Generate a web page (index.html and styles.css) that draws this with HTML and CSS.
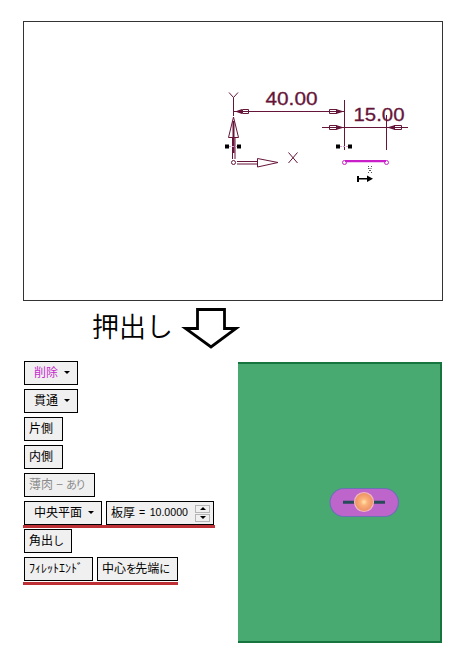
FILE: index.html
```html
<!DOCTYPE html>
<html lang="ja">
<head>
<meta charset="utf-8">
<title>押出し</title>
<link rel="stylesheet" href="styles.css">
</head>
<body>
<main class="page">
  <section class="sketch">
    <svg class="drawing" width="418" height="278" viewBox="24 22 418 278">
      <g class="axis">
        <path d="M233.5 101V116M232.5 137V159M235 137V159M233.5 117L228.5 137.5H238.5ZM237 161.5H257M237 164H257M257.5 158.500V167L278 162.500Z"/>
        <circle cx="233.500" cy="162.500" r="2"/>
        <path d="M229 92.500L233.500 97.500L238 92.500M233.500 97.500V101M288.500 152.500L297.500 163M297.500 152.500L288.500 163"/>
        <path class="thick" d="M233.500 121V153"/>
      </g>
      <g class="dimension">
        <path d="M234 111.500H344M344.500 100V150M386.500 115V150M322 127.500H408"/>
        <path d="M242.500 109.500H248.500V113.500H242.500ZM329.500 109.500H336.500V113.500H329.500ZM329.500 125.500H336.500V129.500H329.500ZM394.500 125.500H401.500V129.500H394.500Z"/>
        <path class="solid" d="M235 111.500L242 109V114ZM344 111.500L336 109V114ZM344 127.500L336 125V130ZM387 127.500L395 125V130Z"/>
        <text x="265.500" y="104.700" textLength="52" lengthAdjust="spacingAndGlyphs">40.00</text>
        <text x="353.500" y="121" textLength="51" lengthAdjust="spacingAndGlyphs">15.00</text>
      </g>
      <g class="profile">
        <path class="profile-line" d="M345 161.200H386"/>
        <circle cx="344.500" cy="162.500" r="2"/>
        <circle cx="386.500" cy="162.500" r="2"/>
        <path class="link" d="M229 146.500H238M340 146.500H348"/>
      </g>
      <g class="handles">
        <path d="M225 144.500h4v4h-4zM237 144.500h4v4h-4zM336 144.500h4v4h-4zM348 144.500h4v4h-4zM357 176h2v6h-2zM359 178h8v1.500h-8zM367 175.500l6 3.200l-6 3.200z"/>
        <path class="marker" d="M368 166.500h1M371 166.500h1M368 168.500h1.500M370.500 168.500h1M369 170.500h2M368 172.500h1M371 172.500h1"/>
      </g>
    </svg>
  </section>

  <div class="operation">
    <span class="operation-name">押出し</span>
    <svg class="arrow" width="60" height="44" viewBox="180 306 60 44"><path d="M197.500 309.500H224.500V328.500H236L211 347L185.500 328.500H197.500Z"/></svg>
  </div>

  <div class="detail">
    <div class="options">
      <div class="row"><button class="btn menu remove">削除<i class="caret"></i></button></div>
      <div class="row"><button class="btn menu">貫通<i class="caret"></i></button></div>
      <div class="row"><button class="btn">片側</button></div>
      <div class="row"><button class="btn">内側</button></div>
      <div class="row"><button class="btn thin" disabled>薄肉<span class="dash">−</span><span class="kana">あり</span></button></div>
      <div class="row marked">
        <button class="btn menu plane">中央平面<i class="caret"></i></button>
        <div class="btn thickness">板厚<span class="value">= 10.0000</span>
          <span class="spinner"><i class="up"></i><i class="down"></i></span>
        </div>
      </div>
      <div class="row"><button class="btn corner">角出<span class="kana">し</span></button></div>
      <div class="row marked ends">
        <button class="btn fillet">ﾌｨﾚｯﾄｴﾝﾄﾞ</button>
        <button class="btn center">中心<span class="kana">を</span>先端<span class="kana">に</span></button>
      </div>
    </div>
    <div class="solid-view">
      <svg width="72" height="32" viewBox="328 486 72 32">
        <defs>
          <radialGradient id="ball"><stop offset="0" stop-color="#ffe9ad"/><stop offset=".35" stop-color="#fbb27a"/><stop offset="1" stop-color="#ec8f62"/></radialGradient>
        </defs>
        <rect class="slot" x="330" y="488.500" width="68.500" height="28" rx="14"/>
        <path class="slot-axis" d="M343 502.300H385"/>
        <circle class="ball" cx="364" cy="502" r="9.500" fill="url(#ball)"/>
      </svg>
    </div>
  </div>
</main>
</body>
</html>
```
FILE: styles.css
```css
* { box-sizing: border-box; }
body { margin: 0; background: #fff; }

.page {
  width: 473px;
  height: 661px;
  padding: 21px 30px 0 23px;
  overflow: hidden;
  font-family: "Noto Sans CJK JP", sans-serif;
}

.sketch {
  width: 420px;
  height: 280px;
  border: 1px solid #333;
}
.drawing { display: block; }
.drawing path, .drawing circle { fill: none; stroke-width: 1; }
.axis, .dimension { stroke: #651539; }
.drawing .thick { stroke-width: 2; }
.drawing .solid { fill: #651539; stroke: none; }
.dimension text {
  fill: #651539;
  stroke: #651539;
  stroke-width: .3;
  font: 19px "Liberation Sans", sans-serif;
}
.profile { stroke: #c91fc9; }
.drawing .profile-line { stroke-width: 2.2; }
.profile .link { stroke: #dba0cf; stroke-dasharray: 2 1; }
.drawing .handles path { fill: #000; }
.handles .marker { stroke: #555; }

.operation {
  display: flex;
  height: 60px;
  padding: 5px 0 0 69px;
}
.operation-name {
  width: 88px;
  font-size: 27px;
  font-weight: 350;
  line-height: 39px;
  white-space: nowrap;
}
.arrow path { fill: none; stroke: #000; stroke-width: 2.8; }

.detail { display: flex; }
.options {
  display: flex;
  flex-direction: column;
  gap: 4px;
  width: 215px;
  padding-left: 1px;
}
.row { display: flex; gap: 4px; height: 24px; }
.marked {
  position: relative;
  width: 191px;
}
.marked::after {
  content: "";
  position: absolute;
  left: -1px;
  right: 0;
  top: 24px;
  height: 3px;
  background: #bd3036;
}
.marked.ends { width: 154px; }
.marked.ends::after { top: 25px; }

.btn {
  display: flex;
  align-items: center;
  flex: none;
  width: 39px;
  height: 24px;
  padding: 0 0 2px 4px;
  border: 1px solid #000;
  background: #f0f0f0;
  color: #000;
  font: 12px/20px "Noto Sans CJK JP", sans-serif;
  white-space: pre;
}
.menu { width: 54px; padding-left: 9px; }
.remove { color: #c52acb; }
.caret {
  margin: 1px 0 0 6px;
  border: 3px solid transparent;
  border-top-color: #000;
  border-bottom: 0;
}
.thin { width: 71px; color: #8b8b8b; }
.dash { width: 13px; text-align: center; }
.kana { display: inline-block; font-size: 11px; letter-spacing: -1.8px; }
.plane { width: 78px; }
.thickness { width: 108px; }
.value {
  margin-left: 4px;
  width: 49px;
  font: 10.6px "Liberation Sans", sans-serif;
  word-spacing: 1.5px;
}
.spinner { display: flex; flex-direction: column; gap: 1px; margin: 2px 0 0 7px; }
.spinner i {
  display: flex;
  align-items: center;
  justify-content: center;
  width: 15px;
  height: 8px;
  border: 1px solid #b5b5b5;
}
.spinner i::before { content: ""; border: 3px solid transparent; }
.spinner .up::before { border-top: 0; border-bottom-color: #000; }
.spinner .down::before { border-bottom: 0; border-top-color: #000; }
.corner { width: 48px; }
.fillet { width: 69px; }
.center { width: 81px; }

.solid-view {
  display: flex;
  align-items: center;
  justify-content: center;
  width: 204px;
  height: 281px;
  padding: 0 0 1px 49px;
  margin-top: 1px;
  border: solid #16753f;
  border-width: 2px 2px 2px 0;
  background: #48aa71;
}
.slot { fill: #be65cb; stroke: #6873b2; stroke-width: 1.2; }
.slot-axis { stroke: #264c59; stroke-width: 3; }
.ball { stroke: #efb9c0; stroke-width: 1.2; }
```
